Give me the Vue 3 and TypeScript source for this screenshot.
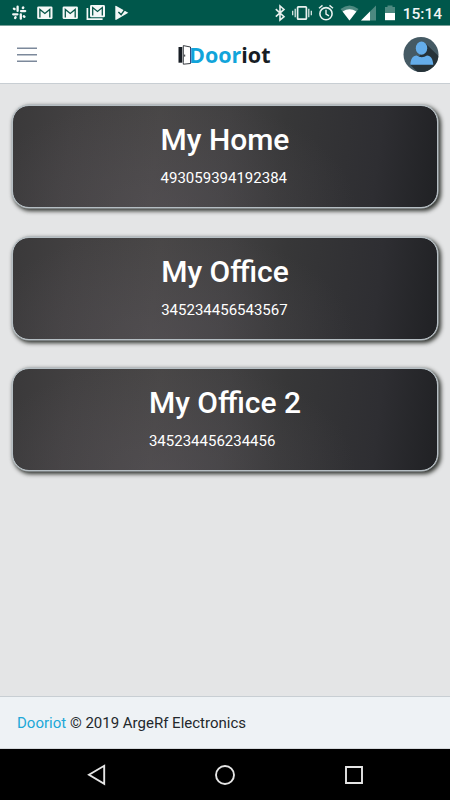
<script setup lang="ts">
interface Door {
  name: string
  serial: string
}

const doors: Door[] = [
  { name: 'My Home', serial: '493059394192384' },
  { name: 'My Office', serial: '345234456543567' },
  { name: 'My Office 2', serial: '345234456234456' },
]
</script>

<template>
  <div class="screen">
    <div class="status">
      <svg class="notifications" width="134" height="25" viewBox="0 0 134 25">
        <g stroke="#f4f8f7" stroke-width="2.3" stroke-linecap="round" fill="none">
          <g v-for="turn in [0, 90, 180, 270]" :key="turn" :transform="`rotate(${turn} 19.2 12.7)`">
            <path d="M17.600 6.700V10.900" />
            <path d="M14 8.700l.5.3" stroke-width="2.500" />
          </g>
        </g>
        <g v-for="x in [37.2, 62.6]" :key="x" :transform="`translate(${x} 6.4)`">
          <rect width="15.300" height="12.700" rx="1.400" fill="#f4f8f7" />
          <path d="M2.700 11.200V3L7.650 7L12.600 3v8.200" fill="none" stroke="#075548" stroke-width="1.300" />
        </g>
        <path d="M87.400 8v11.200h15.200" fill="none" stroke="#f4f8f7" stroke-width="1.700" />
        <rect x="90" y="5" width="15" height="12.300" rx="1.400" fill="#f4f8f7" />
        <path d="M92.700 15.400V7.600L97.500 11.400L102.300 7.600v7.800" fill="none" stroke="#075548" stroke-width="1.300" />
        <path d="M115.300 6.500q0-1 1-.6L128.300 12.700L116.400 19.800q-1.100.5-1.100-.6z" fill="#f4f8f7" />
        <path d="M118.400 12l2.700 2.600L126 7.800" fill="none" stroke="#075548" stroke-width="1.400" />
      </svg>
      <div class="system">
        <svg width="124" height="25" viewBox="272 0 124 25">
          <path d="M275.800 9.200L284 16.700L280 20V6L284 9.400L275.800 16.700" fill="none" stroke="#e9f1ef" stroke-width="1.600" />
          <rect x="297.600" y="6.800" width="8.800" height="12.400" rx=".8" fill="none" stroke="#e9f1ef" stroke-width="1.700" />
          <path d="M295.200 8.700v8.600M292.700 10.700v4.600M308.800 8.700v8.600M311.300 10.700v4.600" stroke="#e9f1ef" stroke-width="1.200" />
          <circle cx="326" cy="13.700" r="6.100" fill="none" stroke="#e9f1ef" stroke-width="1.600" />
          <path d="M326 9.800v4.200l3 1.900M319 8.300l3.500-2.900M333 8.300l-3.500-2.900" fill="none" stroke="#e9f1ef" stroke-width="1.400" />
          <path d="M340.500 9q9-7.200 18 0L349.500 20.400z" fill="#4d8980" />
          <path d="M342.600 11.400q6.900-4.400 13.800 0L349.500 20.400z" fill="#fff" />
          <path d="M361 20.400L376 5.400v15z" fill="#4d8980" />
          <path d="M361 20.400L370 11.400v9z" fill="#fff" />
          <path d="M385 7h2.500V5.500h5V7h2.500v6.500h-10z" fill="#4d8980" />
          <path d="M385 13h10v7.200h-10z" fill="#fff" />
        </svg>
        <span class="clock">15:14</span>
      </div>
    </div>

    <header class="topbar">
      <button class="menu" aria-label="Menu">
        <svg width="20" height="16" viewBox="0 0 20 16">
          <path d="M0 1.300h20M0 7.700h20M0 14.300h20" stroke="#7c899b" stroke-width="1.500" stroke-linecap="round" />
        </svg>
      </button>
      <div class="logo">
        <svg width="14" height="22" viewBox="0 0 14 22">
          <path d="M.5 3h3.800v15.700H.5z" fill="#171d24" />
          <path d="M5.300 18.500V1.600L12.500 3v16.500L5.300 20.200z" fill="#fff" stroke="#22272c" stroke-width=".9" />
          <path d="M6.700 10.600v2" stroke="#22272c" />
        </svg>
        <span class="brand"><b>Door</b>iot</span>
      </div>
      <svg class="avatar" width="36" height="36" viewBox="0 0 36 36">
        <defs><clipPath id="avatar-disc"><circle cx="18" cy="17.500" r="17.500" /></clipPath></defs>
        <g clip-path="url(#avatar-disc)">
          <path d="M0 0h36v36H0z" fill="#455a64" />
          <path d="M22.500 6.500L37 20.500v16H16L7 27.500l10-9z" fill="#263238" />
          <ellipse cx="18.500" cy="11.200" rx="5.700" ry="6.600" fill="#64adea" />
          <path d="M7 27.700c.4-5.700 2.300-9 6.300-9.200q5.200 3.400 10.400 0c4 .2 5.900 3.500 6.300 9.200z" transform="translate(.3)" fill="#64adea" />
        </g>
      </svg>
    </header>

    <main class="doors">
      <article v-for="door in doors" :key="door.name" class="card">
        <div class="label">
          <h2>{{ door.name }}</h2>
          <p>{{ door.serial }}</p>
        </div>
      </article>
    </main>

    <footer class="footer"><a>Dooriot</a>&nbsp;© 2019 ArgeRf Electronics</footer>

    <nav class="navbar">
      <svg width="22" height="22" viewBox="0 0 22 22"><path d="M18.200 1.800v18L3 10.800z" /></svg>
      <svg width="22" height="22" viewBox="0 0 22 22"><circle cx="11" cy="11" r="9" /></svg>
      <svg width="22" height="22" viewBox="0 0 22 22"><path d="M3 3h16v16H3z" /></svg>
    </nav>
  </div>
</template>

<style>
body {
  margin: 0;
}
</style>

<style scoped>
.screen {
  width: 450px;
  height: 800px;
  display: flex;
  flex-direction: column;
  overflow: hidden;
  background: #e4e5e6;
  color: #23282c;
  font-family: Roboto, sans-serif;
}
.status {
  height: 25px;
  flex: none;
  display: flex;
  justify-content: space-between;
  background: #00574b;
  border-bottom: 1px solid #789e98;
}
.system {
  display: flex;
  padding-right: 8px;
}
.clock {
  width: 46px;
  text-align: right;
  color: #f1f6f5;
  font-size: 15.500px;
  font-weight: 500;
  line-height: 28px;
  white-space: nowrap;
}
.topbar {
  height: 57px;
  flex: none;
  display: flex;
  align-items: center;
  padding: 0 11px 0 17px;
  background: #fff;
  border-bottom: 1px solid #c8ced3;
}
.menu {
  padding: 0;
  border: 0;
  background: none;
  display: flex;
}
.logo {
  display: flex;
  align-items: center;
  margin-left: 141px;
}
.brand {
  margin-left: -3px;
  color: #171d24;
  font: 700 21.500px/30px "Open Sans", sans-serif;
}
.brand b {
  color: #11a4da;
  font-weight: 700;
}
.avatar {
  margin-left: auto;
}
.doors {
  flex: 1;
  display: flex;
  flex-direction: column;
  gap: 28.500px;
  padding: 21px 12px 0;
}
.card {
  height: 103px;
  box-sizing: border-box;
  display: flex;
  justify-content: center;
  border: 1px solid #b5bec3;
  border-radius: 17px;
  color: #fff;
  background:
    radial-gradient(ellipse 190px 110px at 36% 100%, rgba(93, 88, 95, .4), transparent),
    linear-gradient(97deg, #3a393a 0%, #424041 14%, #484646 34%, #414041 50%, #373738 63%, #2e2e32 85%, #202124 100%);
  box-shadow: 0 0 0 .5px #b5bec3, 2px 2px 4px 1px #30332f;
}
.label {
  padding-top: 16px;
}
h2 {
  margin: 0;
  font-size: 30px;
  font-weight: 500;
  line-height: 36px;
}
p {
  margin: 9px 0 0;
  font-size: 15px;
  line-height: 22px;
}
.footer {
  height: 51px;
  flex: none;
  display: flex;
  align-items: center;
  padding-left: 17px;
  background: #eef2f5;
  border-top: 1px solid #c8ced3;
  border-bottom: 1px solid #d4d8db;
  font-size: 15px;
}
.footer a {
  color: #20a8d8;
}
.navbar {
  height: 51px;
  flex: none;
  display: flex;
  align-items: center;
  justify-content: center;
  gap: 106.500px;
  background: #000;
}
.navbar svg {
  fill: none;
  stroke: #e5e5e5;
  stroke-width: 1.900;
}
</style>
